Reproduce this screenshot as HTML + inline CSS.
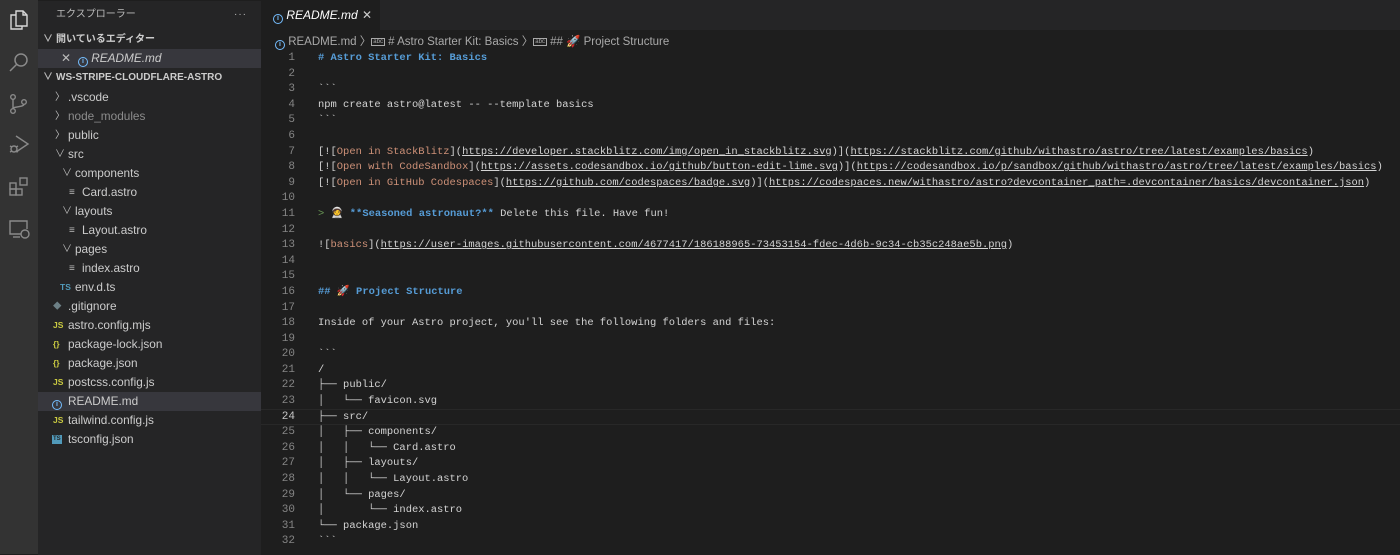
<!DOCTYPE html>
<html><head><meta charset="utf-8"><style>
*{margin:0;padding:0;box-sizing:border-box}
body{width:1400px;height:554px;overflow:hidden;background:#1e1e1e;font-family:"Liberation Sans","Noto Sans CJK JP",sans-serif;color:#ccc;position:relative}
#act{position:absolute;left:0;top:0;width:38px;height:554px;background:#333333}
#act svg{position:absolute;left:7px}
#side{position:absolute;left:38px;top:1px;width:223px;height:554px;background:#252526;font-size:11.8px}
.r{position:absolute;left:0;width:223px;height:19px;line-height:19px;white-space:nowrap;color:#ccc}
.sel{background:#37373d}
.h{font-weight:bold;font-size:10px;color:#ccc}
.ch{position:absolute;font-size:10px;color:#bbb}
.ic{position:absolute;font-size:8.5px;font-weight:bold}
#tabs{position:absolute;left:261px;top:0;width:1139px;height:30px;background:#252526}
#tab{position:absolute;left:0;top:0;width:119px;height:30px;background:#1e1e1e;font-size:12px;font-style:italic;line-height:30px;color:#fff}
#bc{position:absolute;left:275px;top:33px;font-size:11.5px;color:#a9a9a9;white-space:nowrap}
#code{position:absolute;left:261px;top:51px;font-family:"Liberation Mono",monospace;font-size:10.44px;line-height:15.6px;white-space:pre;color:#d4d4d4}
.ln{display:inline-block;width:34px;text-align:right;color:#858585;margin-right:23px;font-size:11px}
.b{color:#569cd6;font-weight:bold}
.o{color:#ce9178}
.u{text-decoration:underline}
.g{color:#6a9955}
.cur{position:absolute;left:261px;top:409px;width:1139px;height:16px;border:1px solid #282828;border-width:1px 0}
.info{display:inline-block;width:10px;height:10px;border:1px solid #75beff;border-radius:50%;font-size:7px;line-height:8px;text-align:center;color:#75beff;font-style:normal;font-weight:bold;vertical-align:-1px}
</style></head><body>
<div id="act">
<svg style="top:8px" width="24" height="24" viewBox="0 0 24 24" fill="none" stroke="#d7d7d7" stroke-width="1.4"><path d="M9 3h7l4 4v11H9z"/><path d="M16 3v4h4"/><path d="M9 7H4v14h11v-3"/></svg>
<svg style="top:50px" width="24" height="24" viewBox="0 0 24 24" fill="none" stroke="#8a8a8a" stroke-width="1.5"><circle cx="14" cy="10" r="6"/><path d="M9.5 14.5L3 21"/></svg>
<svg style="top:92px" width="24" height="24" viewBox="0 0 24 24" fill="none" stroke="#8a8a8a" stroke-width="1.4"><circle cx="6" cy="5" r="2.3"/><circle cx="6" cy="19" r="2.3"/><circle cx="17" cy="10" r="2.3"/><path d="M6 7.3v9.4M17 12.3c0 3-11 2-11 4.4"/></svg>
<svg style="top:132px" width="24" height="24" viewBox="0 0 24 24" fill="none" stroke="#8a8a8a" stroke-width="1.4"><path d="M9 4l12 8-12 8"/><circle cx="7" cy="17" r="3"/><path d="M3 14l2 1M3 20l2-1M11 14l-2 1M11 20l-2-1"/></svg>
<svg style="top:175px" width="24" height="24" viewBox="0 0 24 24" fill="none" stroke="#8a8a8a" stroke-width="1.4"><rect x="3" y="8" width="6" height="6"/><rect x="3" y="14" width="6" height="6"/><rect x="9" y="14" width="6" height="6"/><rect x="13" y="3" width="7" height="7"/></svg>
<svg style="top:217px" width="24" height="24" viewBox="0 0 24 24" fill="none" stroke="#8a8a8a" stroke-width="1.4"><path d="M14 17H3V4h17v8"/><path d="M6 20h7"/><circle cx="18" cy="17" r="4"/></svg>
</div>
<div id="side">
<div class="r" style="top:4px;left:18px;font-size:10px;color:#bbb">エクスプローラー<span style="position:absolute;left:178px;letter-spacing:1px">···</span></div>
<div class="r h" style="top:29px"><span class="ch" style="left:5px">∨</span><span style="position:absolute;left:18px">開いているエディター</span></div>
<div class="r sel" style="top:48px"><span style="position:absolute;left:23px;color:#bbb">✕</span><span style="position:absolute;left:40px"><span class="info">i</span> <i>README.md</i></span></div>
<div class="r h" style="top:67px"><span class="ch" style="left:5px">∨</span><span style="position:absolute;left:18px">WS-STRIPE-CLOUDFLARE-ASTRO</span></div>
<div class="r" style="top:87px"><span class="ch" style="left:17px">〉</span><span style="position:absolute;left:30px">.vscode</span></div>
<div class="r" style="top:106px"><span class="ch" style="left:17px">〉</span><span style="position:absolute;left:30px;color:#8c8c8c">node_modules</span></div>
<div class="r" style="top:125px"><span class="ch" style="left:17px">〉</span><span style="position:absolute;left:30px">public</span></div>
<div class="r" style="top:144px"><span class="ch" style="left:17px">∨</span><span style="position:absolute;left:30px">src</span></div>
<div class="r" style="top:163px"><span class="ch" style="left:24px">∨</span><span style="position:absolute;left:37px">components</span></div>
<div class="r" style="top:182px"><span class="ch" style="left:31px;color:#bbb">≡</span><span style="position:absolute;left:44px">Card.astro</span></div>
<div class="r" style="top:201px"><span class="ch" style="left:24px">∨</span><span style="position:absolute;left:37px">layouts</span></div>
<div class="r" style="top:220px"><span class="ch" style="left:31px;color:#bbb">≡</span><span style="position:absolute;left:44px">Layout.astro</span></div>
<div class="r" style="top:239px"><span class="ch" style="left:24px">∨</span><span style="position:absolute;left:37px">pages</span></div>
<div class="r" style="top:258px"><span class="ch" style="left:31px;color:#bbb">≡</span><span style="position:absolute;left:44px">index.astro</span></div>
<div class="r" style="top:277px"><span class="ic" style="left:22px;color:#519aba">TS</span><span style="position:absolute;left:37px">env.d.ts</span></div>
<div class="r" style="top:296px"><span class="ic" style="left:15px;color:#6d8086">◆</span><span style="position:absolute;left:30px">.gitignore</span></div>
<div class="r" style="top:315px"><span class="ic" style="left:15px;color:#cbcb41">JS</span><span style="position:absolute;left:30px">astro.config.mjs</span></div>
<div class="r" style="top:334px"><span class="ic" style="left:15px;color:#cbcb41">{}</span><span style="position:absolute;left:30px">package-lock.json</span></div>
<div class="r" style="top:353px"><span class="ic" style="left:15px;color:#cbcb41">{}</span><span style="position:absolute;left:30px">package.json</span></div>
<div class="r" style="top:372px"><span class="ic" style="left:15px;color:#cbcb41">JS</span><span style="position:absolute;left:30px">postcss.config.js</span></div>
<div class="r sel" style="top:391px"><span style="position:absolute;left:14px"><span class="info">i</span></span><span style="position:absolute;left:30px">README.md</span></div>
<div class="r" style="top:410px"><span class="ic" style="left:15px;color:#cbcb41">JS</span><span style="position:absolute;left:30px">tailwind.config.js</span></div>
<div class="r" style="top:429px"><span class="ic" style="left:14px;background:#519aba;color:#252526;font-size:6px;padding:0 1px;top:5px;line-height:9px">TS</span><span style="position:absolute;left:30px">tsconfig.json</span></div>
</div>
<div id="tabs"><div id="tab"><span style="position:absolute;left:12px"><span class="info">i</span> README.md</span><span style="position:absolute;left:101px;font-style:normal;color:#ccc">✕</span></div></div>
<div id="bc"><span class="info">i</span> README.md 〉<span style="border:1px solid #a9a9a9;font-size:6px;padding:0 1px;vertical-align:2px">abc</span> # Astro Starter Kit: Basics 〉<span style="border:1px solid #a9a9a9;font-size:6px;padding:0 1px;vertical-align:2px">abc</span> ## 🚀 Project Structure</div>
<div class="cur"></div>
<div id="code"><span class="ln">1</span><span class="b"># Astro Starter Kit: Basics</span>
<span class="ln">2</span>
<span class="ln">3</span>&#96;&#96;&#96;
<span class="ln">4</span>npm create astro@latest -- --template basics
<span class="ln">5</span>&#96;&#96;&#96;
<span class="ln">6</span>
<span class="ln">7</span>[![<span class="o">Open in StackBlitz</span>](<span class="u">https://developer.stackblitz.com/img/open_in_stackblitz.svg</span>)](<span class="u">https://stackblitz.com/github/withastro/astro/tree/latest/examples/basics</span>)
<span class="ln">8</span>[![<span class="o">Open with CodeSandbox</span>](<span class="u">https://assets.codesandbox.io/github/button-edit-lime.svg</span>)](<span class="u">https://codesandbox.io/p/sandbox/github/withastro/astro/tree/latest/examples/basics</span>)
<span class="ln">9</span>[![<span class="o">Open in GitHub Codespaces</span>](<span class="u">https://github.com/codespaces/badge.svg</span>)](<span class="u">https://codespaces.new/withastro/astro?devcontainer_path=.devcontainer/basics/devcontainer.json</span>)
<span class="ln">10</span>
<span class="ln">11</span><span class="g">&gt;</span> 🧑‍🚀 <span class="b">**Seasoned astronaut?**</span> Delete this file. Have fun!
<span class="ln">12</span>
<span class="ln">13</span>![<span class="o">basics</span>](<span class="u">https://user-images.githubusercontent.com/4677417/186188965-73453154-fdec-4d6b-9c34-cb35c248ae5b.png</span>)
<span class="ln">14</span>
<span class="ln">15</span>
<span class="ln">16</span><span class="b">## 🚀 Project Structure</span>
<span class="ln">17</span>
<span class="ln">18</span>Inside of your Astro project, you'll see the following folders and files:
<span class="ln">19</span>
<span class="ln">20</span>&#96;&#96;&#96;
<span class="ln">21</span>/
<span class="ln">22</span>├── public/
<span class="ln">23</span>│   └── favicon.svg
<span class="ln" style="color:#c6c6c6">24</span>├── src/
<span class="ln">25</span>│   ├── components/
<span class="ln">26</span>│   │   └── Card.astro
<span class="ln">27</span>│   ├── layouts/
<span class="ln">28</span>│   │   └── Layout.astro
<span class="ln">29</span>│   └── pages/
<span class="ln">30</span>│       └── index.astro
<span class="ln">31</span>└── package.json
<span class="ln">32</span>&#96;&#96;&#96;
</div>
</body></html>
